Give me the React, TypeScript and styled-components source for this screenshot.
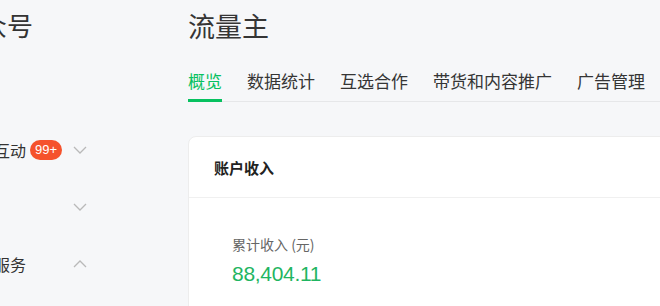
import React from "react";
import styled, { createGlobalStyle } from "styled-components";

const GlobalStyle = createGlobalStyle`
  html, body {
    margin: 0;
    padding: 0;
    background: #f6f7f9;
    font-family: "Noto Sans CJK SC", "Noto Sans", sans-serif;
    color: #333;
  }
`;

const Page = styled.div`
  display: flex;
  width: 660px;
  height: 306px;
  overflow: hidden;
  background: #f6f7f9;
`;

// the shot is cropped: the left part of the menu lies off screen
const Sidebar = styled.aside`
  flex-shrink: 0;
  width: 214px;
  margin-left: -54px;
  display: flex;
  flex-direction: column;
`;

const Brand = styled.div`
  padding: 10px 0 0 9px;
  font-size: 26px;
  line-height: 30px;
  color: #333;
  white-space: nowrap;
  height: 138px;
  box-sizing: border-box;
`;

const MenuList = styled.ul`
  list-style: none;
  margin: 0;
  padding: 0;
  display: flex;
  flex-direction: column;
  gap: 33px;
`;

const MenuItem = styled.li`
  display: flex;
  align-items: center;
  width: 142px;
  height: 24px;
  font-size: 16px;
  color: #333;
  white-space: nowrap;
`;

const Badge = styled.span`
  margin-left: 4px;
  height: 20px;
  padding: 0 5px;
  border-radius: 10px;
  background: #f5522c;
  color: #fff;
  font-family: "Liberation Sans", Arial, sans-serif;
  font-size: 13px;
  line-height: 20px;
`;

const Chevron = styled.svg`
  margin-left: auto;
  width: 16px;
  height: 16px;
  color: #b9b9b9;
`;

const Main = styled.main`
  flex: 1;
  min-width: 0;
  padding: 0 0 0 28px;
`;

const Title = styled.h1`
  margin: 10px 0 0;
  font-size: 27px;
  font-weight: 400;
  line-height: 32px;
  color: #353535;
`;

const Tabs = styled.nav`
  display: flex;
  gap: 25px;
  margin-top: 27px;
  border-bottom: 1px solid #e6e7e9;
  margin-right: -40px;
`;

const Tab = styled.div<{ $active?: boolean }>`
  font-size: 17px;
  line-height: 24px;
  padding-bottom: 6px;
  margin-bottom: -1px;
  white-space: nowrap;
  color: ${(p) => (p.$active ? "#07c160" : "#353535")};
  border-bottom: 3px solid ${(p) => (p.$active ? "#07c160" : "transparent")};
`;

const Card = styled.section`
  margin-top: 34px;
  margin-right: -40px;
  background: #fff;
  border: 1px solid #ededed;
  border-radius: 8px;
`;

const CardHeader = styled.header`
  height: 60px;
  display: flex;
  align-items: center;
  padding-left: 25px;
  font-size: 15px;
  font-weight: 700;
  color: #222;
  border-bottom: 1px solid #f0f0f0;
`;

const CardBody = styled.div`
  padding: 36px 0 0 43px;
  height: 140px;
`;

const StatLabel = styled.div`
  font-size: 14px;
  line-height: 20px;
  color: #666;
`;

const StatValue = styled.div`
  margin-top: 7px;
  font-family: "Liberation Sans", Arial, sans-serif;
  font-size: 21px;
  line-height: 26px;
  color: #1fb562;
  letter-spacing: -0.3px;
`;

const ChevronIcon = ({ up }: { up?: boolean }) => (
  <Chevron viewBox="0 0 16 16" fill="none">
    <path
      d={up ? "M2 11 L8 5 L14 11" : "M2 5 L8 11 L14 5"}
      stroke="currentColor"
      strokeWidth="1.3"
    />
  </Chevron>
);

const tabs = ["概览", "数据统计", "互选合作", "带货和内容推广", "广告管理"];

const App = () => {
  return (
    <>
      <GlobalStyle />
      <Page>
        <Sidebar>
          <Brand>公众号</Brand>
          <MenuList>
            <MenuItem>
              内容与互动
              <Badge>99+</Badge>
              <ChevronIcon />
            </MenuItem>
            <MenuItem>
              数据
              <ChevronIcon />
            </MenuItem>
            <MenuItem>
              广告与服务
              <ChevronIcon up />
            </MenuItem>
          </MenuList>
        </Sidebar>
        <Main>
          <Title>流量主</Title>
          <Tabs>
            {tabs.map((t, i) => (
              <Tab key={t} $active={i === 0}>
                {t}
              </Tab>
            ))}
          </Tabs>
          <Card>
            <CardHeader>账户收入</CardHeader>
            <CardBody>
              <StatLabel>累计收入 (元)</StatLabel>
              <StatValue>88,404.11</StatValue>
            </CardBody>
          </Card>
        </Main>
      </Page>
    </>
  );
};

export default App;
